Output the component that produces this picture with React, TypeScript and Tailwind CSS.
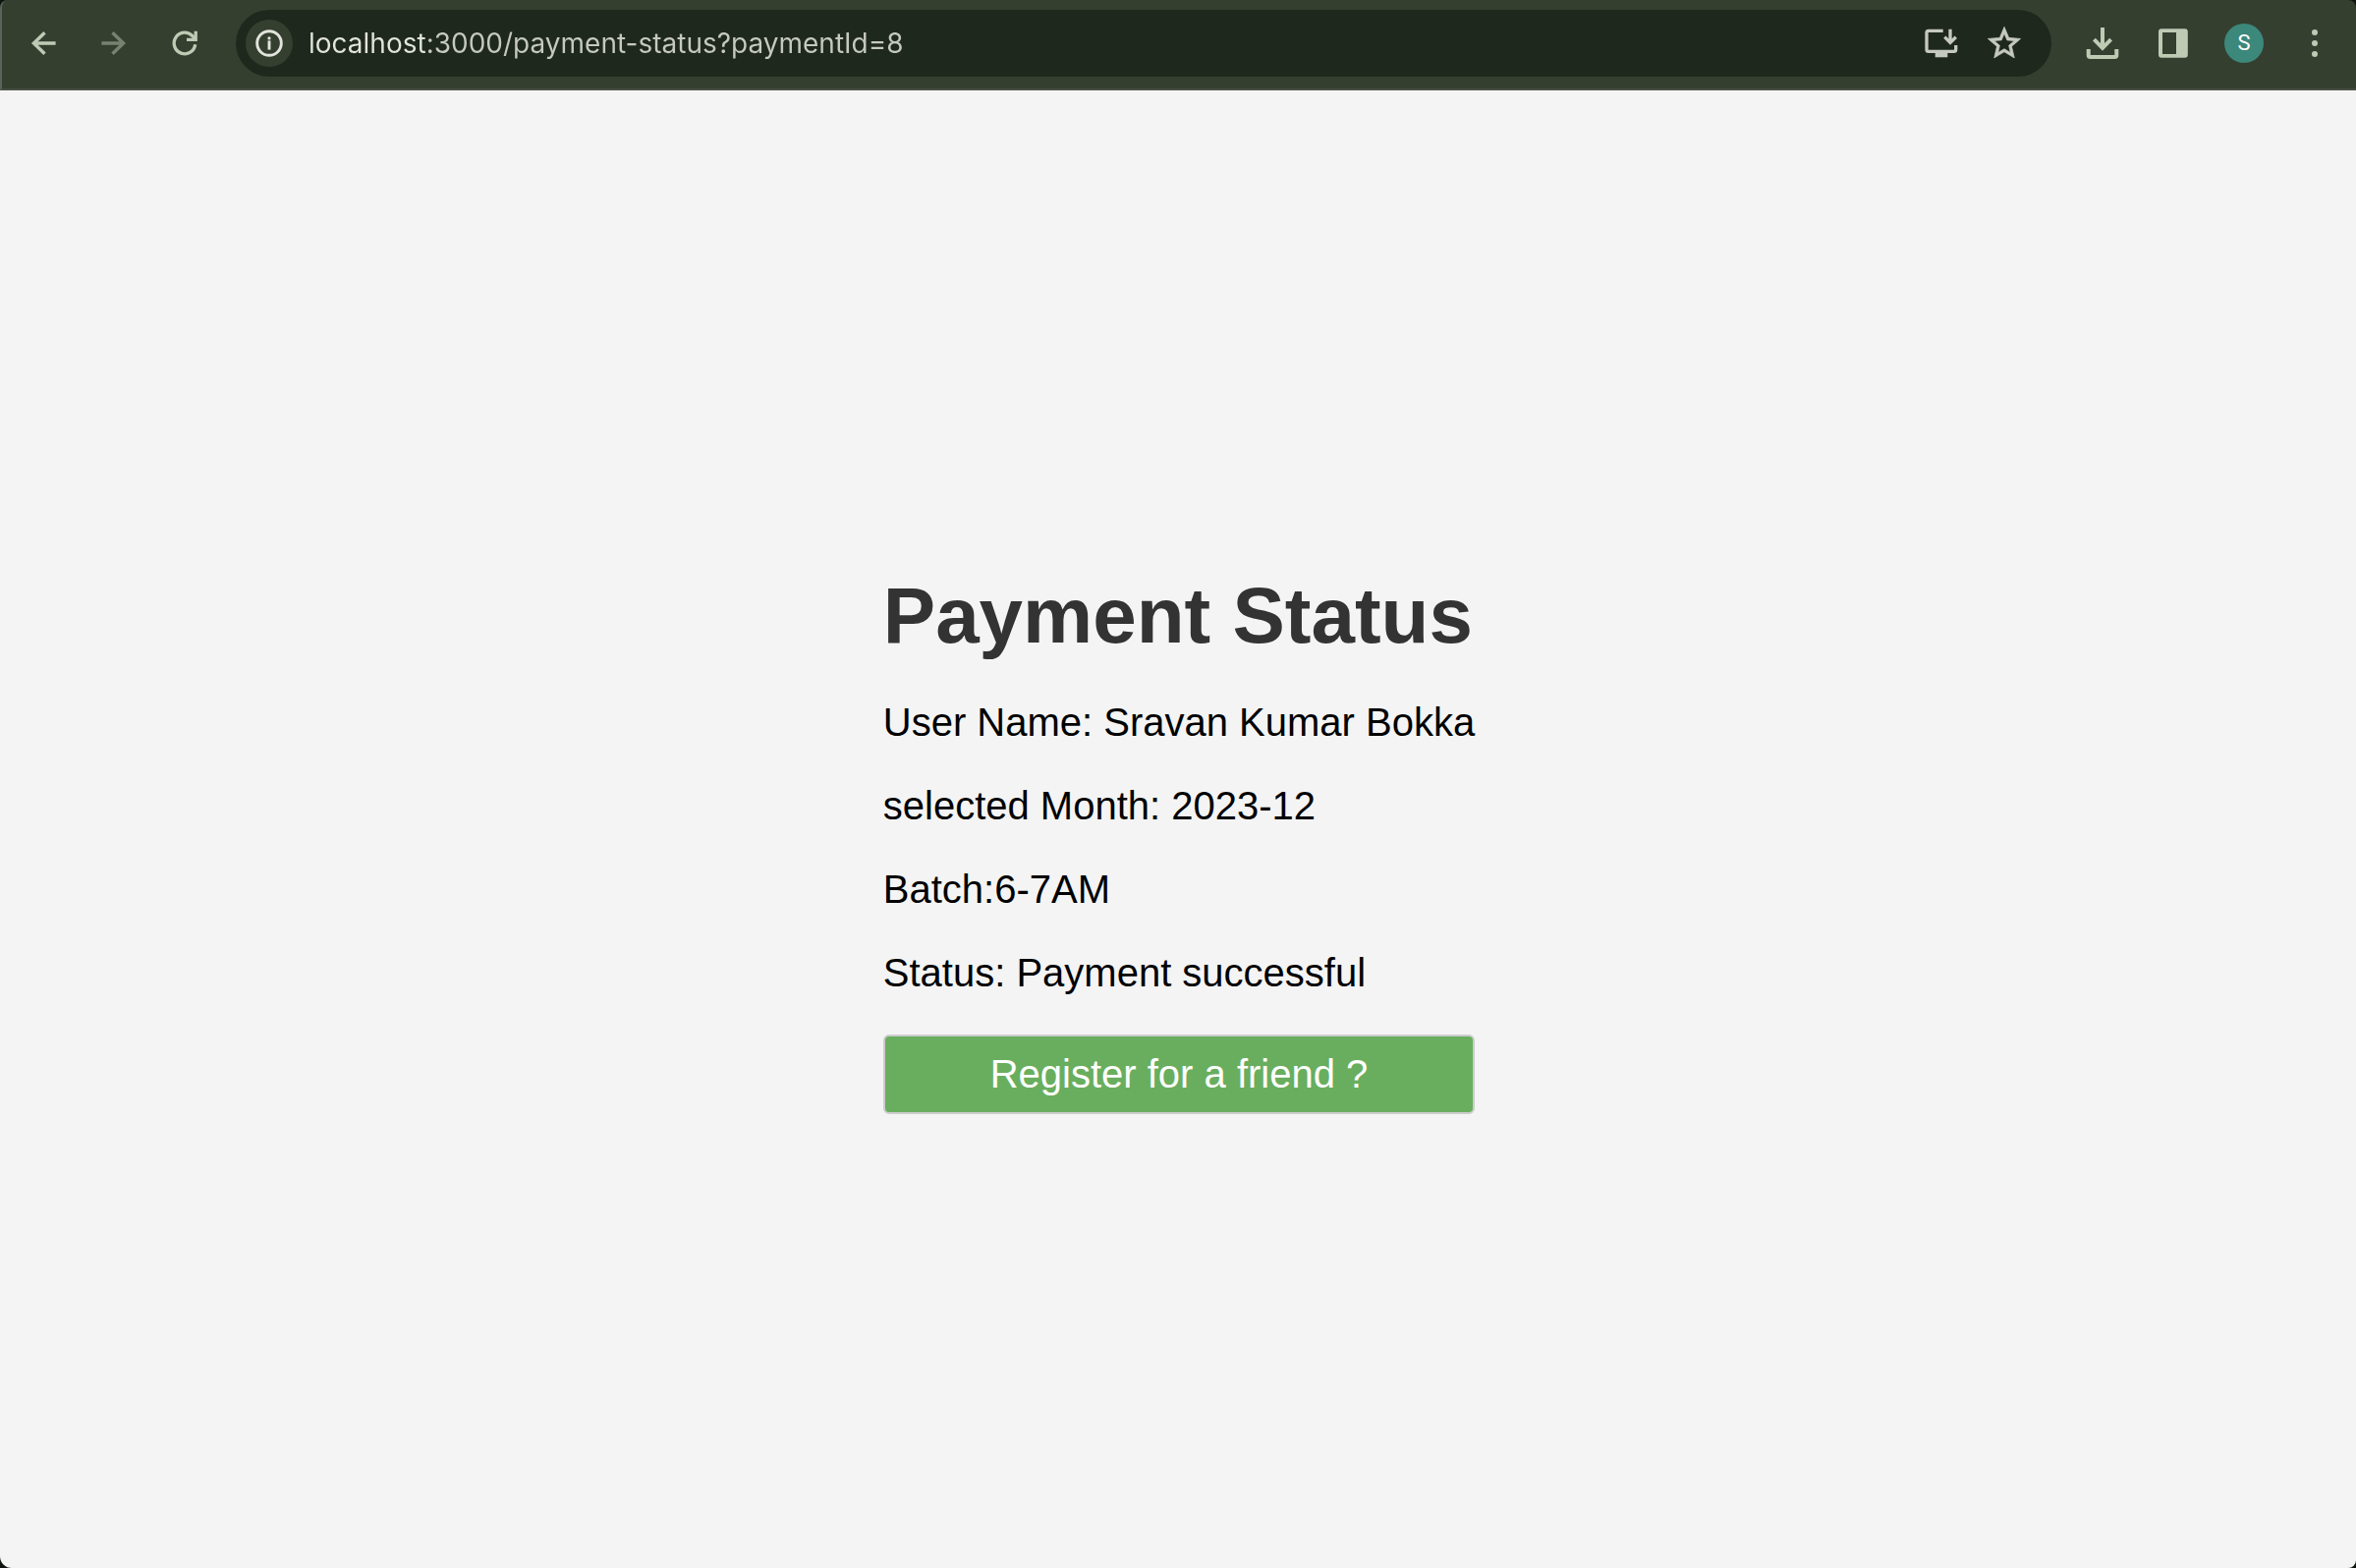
import React from "react";

type IconButtonProps = {
  label: string;
  className?: string;
  disabled?: boolean;
  children: React.ReactNode;
};

function ToolbarButton({ label, className = "text-[#bfcab5]", disabled, children }: IconButtonProps) {
  return (
    <button
      type="button"
      aria-label={label}
      disabled={disabled}
      className={`flex size-14 shrink-0 items-center justify-center rounded-full ${className}`}
    >
      {children}
    </button>
  );
}

function AddressButton({ label, children }: IconButtonProps) {
  return (
    <button
      type="button"
      aria-label={label}
      className="flex size-12 shrink-0 items-center justify-center rounded-full text-[#c5c9c0]"
    >
      {children}
    </button>
  );
}

const BackIcon = () => (
  <svg viewBox="0 0 56 56" className="size-14" fill="none" stroke="currentColor" strokeWidth="3.4">
    <path d="M40.6 28H18.2M29.5 17.2L18.4 28L29.5 38.8" />
  </svg>
);

const ForwardIcon = () => (
  <svg viewBox="0 0 56 56" className="size-14" fill="none" stroke="currentColor" strokeWidth="3.4">
    <path d="M15.4 28H37.5M26.5 17.2L37.6 28L26.5 38.8" />
  </svg>
);

const ReloadIcon = () => (
  <svg viewBox="0 0 56 56" className="size-14" fill="none" stroke="currentColor" strokeWidth="3.3">
    <path d="M38.7 29.2A10.8 10.8 0 1 1 35.8 20.5L38.5 23.5" />
    <path d="M39.2 15.7V24.4H30" />
  </svg>
);

const InfoIcon = () => (
  <svg viewBox="0 0 48 48" className="size-12" fill="none" stroke="currentColor" strokeWidth="2.9">
    <circle cx="24" cy="24" r="12.3" />
    <path d="M24 21.4V30.6" />
    <circle cx="24" cy="18.9" r="1.6" fill="currentColor" stroke="none" />
  </svg>
);

const InstallIcon = () => (
  <svg viewBox="0 0 48 48" className="size-12" fill="none" stroke="currentColor" strokeWidth="3.3">
    <path d="M25.7 11.3H10.9Q9 11.3 9 13.2V30.4Q9 32.3 10.9 32.3H36.8Q38.7 32.3 38.7 30.4V26" />
    <path d="M17.7 32.3H30.3V38.3H17.7Z" fill="currentColor" stroke="none" />
    <path d="M33 9.7V23.5M27.3 17.7L33 23.4L38.8 17.7" />
  </svg>
);

const StarIcon = () => (
  <svg viewBox="0 0 24 24" className="size-10" fill="currentColor" stroke="currentColor" strokeWidth="0.4">
    <path d="M22 9.24l-7.19-.62L12 2 9.19 8.63 2 9.24l5.46 4.73L5.82 21 12 17.27 18.18 21l-1.63-7.03L22 9.24zM12 15.4l-3.76 2.27 1-4.28-3.32-2.88 4.38-.38L12 6.1l1.71 4.04 4.38.38-3.32 2.88 1 4.28L12 15.4z" />
  </svg>
);

const DownloadIcon = () => (
  <svg viewBox="0 0 56 56" className="size-14" fill="none" stroke="currentColor" strokeWidth="4">
    <path d="M13.7 34V40.2Q13.7 42 15.5 42H40.5Q42.3 42 42.3 40.2V34" />
    <path d="M28 12V32.6M19.4 24.2L28 32.8L36.6 24.2" />
  </svg>
);

const SidePanelIcon = () => (
  <svg viewBox="0 0 56 56" className="size-14" fill="currentColor" fillRule="evenodd">
    <path d="M16 13.2H39.8Q42.8 13.2 42.8 16.2V39.8Q42.8 42.8 39.8 42.8H16Q13 42.8 13 39.8V16.2Q13 13.2 16 13.2ZM17 17V39H31V17Z" />
  </svg>
);

const MenuIcon = () => (
  <svg viewBox="0 0 56 56" className="size-14" fill="currentColor">
    <circle cx="28" cy="17" r="3" />
    <circle cx="28" cy="28" r="3" />
    <circle cx="28" cy="39" r="3" />
  </svg>
);

function BrowserToolbar() {
  return (
    <header className="flex items-center gap-6 rounded-t-lg border-b-2 border-l-2 border-b-[#474e42] border-l-[#59645a] bg-[#353f30] pt-2.5 pr-3.5 pb-3 pl-3.5">
      <nav aria-label="History" className="flex gap-4">
        <ToolbarButton label="Back"><BackIcon /></ToolbarButton>
        <ToolbarButton label="Forward" disabled className="text-[#798170]"><ForwardIcon /></ToolbarButton>
        <ToolbarButton label="Reload"><ReloadIcon /></ToolbarButton>
      </nav>
      <div className="flex h-[68px] min-w-0 flex-1 items-center gap-4 rounded-full bg-[#1f281d] pr-6 pl-2.5">
        <button
          type="button"
          aria-label="View site information"
          className="flex size-12 shrink-0 items-center justify-center rounded-full bg-[#353f30] text-[#e1e4dc]"
        >
          <InfoIcon />
        </button>
        <input
          type="text"
          aria-label="Address"
          spellCheck={false}
          defaultValue="localhost:3000/payment-status?paymentId=8"
          className="h-12 min-w-0 flex-1 bg-[linear-gradient(to_right,#e2e5dc_119px,#c5c9c0_119px)] bg-clip-text font-[Inter,sans-serif] text-[28px] text-transparent outline-none"
        />
        <AddressButton label="Install app"><InstallIcon /></AddressButton>
        <AddressButton label="Bookmark this page"><StarIcon /></AddressButton>
      </div>
      <div className="flex gap-4">
        <ToolbarButton label="Downloads"><DownloadIcon /></ToolbarButton>
        <ToolbarButton label="Side panel"><SidePanelIcon /></ToolbarButton>
        <ToolbarButton label="Profile" className="text-white">
          <span className="flex size-10 items-center justify-center rounded-full bg-[#3c887b] font-[Roboto,sans-serif] text-[22px] leading-none">
            S
          </span>
        </ToolbarButton>
        <ToolbarButton label="Menu"><MenuIcon /></ToolbarButton>
      </div>
    </header>
  );
}

const details = [
  "User Name: Sravan Kumar Bokka",
  "selected Month: 2023-12",
  "Batch:6-7AM",
  "Status: Payment successful",
];

export default function App() {
  return (
    <div className="flex min-h-screen flex-col bg-[#10140f]">
      <BrowserToolbar />
      <main className="flex flex-1 items-center justify-center rounded-br-lg rounded-bl-xl bg-[#f4f4f4] pt-[26px] pl-0.5 font-['Liberation_Sans',Arial,sans-serif]">
        <section className="flex flex-col gap-10 text-[40px] leading-[45px] text-black">
          <h1 className="text-[80px] leading-[93px] font-bold text-[#333333]">Payment Status</h1>
          {details.map((line) => (
            <p key={line}>{line}</p>
          ))}
          <button
            type="button"
            className="rounded-md border-2 border-[#cccccc] bg-[#69ae5e] py-4 text-white"
          >
            Register for a friend ?
          </button>
        </section>
      </main>
    </div>
  );
}
